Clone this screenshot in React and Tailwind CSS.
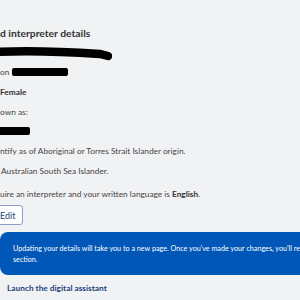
import React from "react";

export default function App() {
  return (
    <div className="w-[300px] h-[300px] overflow-hidden bg-[#f1f2f4] text-[#454545]" style={{ fontFamily: 'Lato, "Open Sans", sans-serif' }}>
      <div className="pt-[26px] flex flex-col">
        <h2 className="text-[10.3px] font-bold leading-[14px] text-[#333] whitespace-nowrap">d interpreter details</h2>
        <svg width="112" height="16" viewBox="0 0 112 16" className="mt-[5px]">
          <path d="M-4 7 C30 5 70 7 100 9 L108 11" stroke="#000" strokeWidth="8.5" fill="none" strokeLinecap="round" />
        </svg>
        <div className="mt-[4px] h-[14px] flex items-center gap-[3px] text-[8.3px] whitespace-nowrap">
          <span>on</span>
          <span className="w-[56px] h-[8px] bg-black rounded-[2px]" />
        </div>
        <div className="mt-[6px] h-[14px] flex items-center text-[8.3px] font-bold whitespace-nowrap text-[#333]">Female</div>
        <div className="mt-[6px] h-[14px] flex items-center text-[8.3px] whitespace-nowrap">own as:</div>
        <div className="mt-[8px] w-[30px] h-[8px] bg-black rounded-r-[2px]" />
        <div className="mt-[9px] h-[14px] flex items-center text-[8.3px] whitespace-nowrap">ntify as of Aboriginal or Torres Strait Islander origin.</div>
        <div className="mt-[6px] h-[14px] flex items-center pl-[1px] text-[8.3px] whitespace-nowrap">Australian South Sea Islander.</div>
        <div className="mt-[9px] h-[14px] flex items-center text-[8.3px] whitespace-nowrap">uire an interpreter and your written language is <b className="ml-[2px] text-[#333]">English</b>.</div>
        <div className="mt-[4px] flex">
          <button className="-ml-[3px] h-[20px] pl-[2px] pr-[7px] bg-white border border-[#8aa0c4] rounded-[3px] text-[9px] text-[#1d3f7a] leading-none">Edit</button>
        </div>
        <div className="mt-[7px] w-[380px] h-[43px] bg-[#0057b8] rounded-[8px] pl-[13px] flex flex-col justify-center text-[7.2px] leading-[11px] text-white whitespace-nowrap">
          <span>Updating your details will take you to a new page. Once you've made your changes, you'll return to this</span>
          <span>section.</span>
        </div>
        <div className="mt-[7px] pl-[7px] text-[8.3px] font-bold text-[#1d3f7a] whitespace-nowrap">Launch the digital assistant</div>
      </div>
    </div>
  );
}
